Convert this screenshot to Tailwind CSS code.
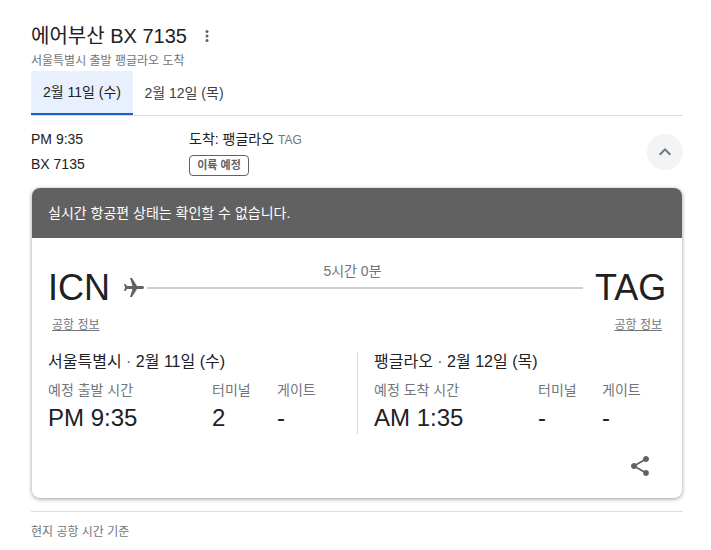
<!DOCTYPE html>
<html lang="ko">
<head>
  <meta charset="UTF-8" />
  <title>에어부산 BX 7135</title>
  <script src="https://cdn.jsdelivr.net/npm/@tailwindcss/browser@4"></script>
</head>
<body class="bg-white text-[#202124] font-['Liberation_Sans','Noto_Sans_CJK_KR',sans-serif] overflow-hidden">
  <div class="w-[652px] ml-[31px] pt-[23px]">
    <!-- Title -->
    <div class="flex items-center h-[26px]">
      <h1 class="text-[20px] leading-[26px] font-normal">에어부산 BX 7135</h1>
      <svg class="ml-2 w-[24px] h-[24px] text-[#5f6368]" viewBox="0 0 24 24" fill="currentColor">
        <circle cx="12" cy="7.5" r="1.5"/><circle cx="12" cy="12" r="1.5"/><circle cx="12" cy="16.5" r="1.5"/>
      </svg>
    </div>
    <p class="text-[12px] leading-[16px] text-[#70757a] mt-[4px]">서울특별시 출발 팽글라오 도착</p>

    <!-- Tabs -->
    <div class="flex h-[44px] border-b border-[#dadce0] mt-[2px] box-content">
      <div class="w-[102px] h-[44px] bg-[#e8f0fe] border-b-2 border-[#1a5fc8] flex items-center justify-center text-[14px] text-[#202124]">2월 11일 (수)</div>
      <div class="w-[102px] h-[44px] flex items-center justify-center text-[14px] text-[#3c4043]">2월 12일 (목)</div>
    </div>

    <!-- Flight row -->
    <div class="flex relative h-[72px] text-[14px]">
      <div class="w-[158px] pt-[13px]">
        <div class="leading-[20px]">PM 9:35</div>
        <div class="leading-[20px] mt-[5px]">BX 7135</div>
      </div>
      <div class="pt-[13px]">
        <div class="leading-[20px]">도착: 팽글라오 <span class="text-[12px] text-[#70757a]">TAG</span></div>
        <div class="mt-[5px] w-[60px] h-[21px] border border-[#5f6368] rounded-[4px] flex items-center justify-center text-[11px] font-bold text-[#5f6368]">이륙 예정</div>
      </div>
      <div class="ml-auto mt-[18px] w-[36px] h-[36px] rounded-full bg-[#f1f3f4] flex items-center justify-center">
        <svg class="w-[24px] h-[24px] text-[#70757a]" viewBox="0 0 24 24" fill="currentColor"><path d="M12 8l-6 6 1.41 1.41L12 10.83l4.59 4.58L18 14z"/></svg>
      </div>
    </div>

    <!-- Card -->
    <div class="mx-px h-[310px] rounded-[8px] bg-white shadow-[0_1px_4px_rgba(0,0,0,0.4)] overflow-hidden">
      <div class="h-[50px] bg-[#616161] text-white text-[14px] flex items-center px-[16px]">실시간 항공편 상태는 확인할 수 없습니다.</div>

      <div class="pl-[16px] pr-[17px] pt-[24px]">
        <!-- Route -->
        <div class="flex items-start h-[52px]">
          <div class="text-[36px] leading-[52px] w-[74px]">ICN</div>
          <div class="flex-1 relative flex items-center mt-[2px] h-[48px]">
            <svg class="w-[24px] h-[24px] text-[#5f6368] shrink-0 rotate-90" viewBox="0 0 24 24" fill="currentColor"><path d="M21 16v-2l-8-5V3.500c0-.83-.67-1.500-1.500-1.500S10 2.670 10 3.500V9l-8 5v2l8-2.500V19l-2 1.500V22l3.500-1 3.500 1v-1.500L13 19v-5.500l8 2.500z"/></svg>
            <div class="h-[2px] flex-1 bg-[#cfcfcf] ml-[1px] mr-[12px]"></div>
            <div class="absolute left-0 right-0 top-[-1px] text-center text-[14px] leading-[16px] text-[#70757a] pr-[12px]">5시간 0분</div>
          </div>
          <div class="text-[36px] leading-[52px] w-[70px] text-right">TAG</div>
        </div>
        <div class="flex justify-between pl-[4px] pr-[3px] text-[12px] leading-[16px] text-[#70757a] underline mt-[3px]">
          <span>공항 정보</span><span>공항 정보</span>
        </div>

        <!-- Airports -->
        <div class="flex mt-[19px]">
          <div class="w-[310px] h-[82px] border-r border-[#dadce0]">
            <div class="text-[16px] leading-[18px] pt-px h-[18px]">서울특별시 <span class="text-[#5f6368]">·</span> 2월 11일 (수)</div>
            <div class="flex text-[14px] text-[#70757a] leading-[18px] mt-[11px]">
              <div class="w-[164px]">예정 출발 시간</div><div class="w-[65px]">터미널</div><div>게이트</div>
            </div>
            <div class="flex text-[24px] leading-[28px] mt-[5px]">
              <div class="w-[164px]">PM 9:35</div><div class="w-[65px]">2</div><div>-</div>
            </div>
          </div>
          <div class="pl-[16px] flex-1">
            <div class="text-[16px] leading-[18px] pt-px h-[18px]">팽글라오 <span class="text-[#5f6368]">·</span> 2월 12일 (목)</div>
            <div class="flex text-[14px] text-[#70757a] leading-[18px] mt-[11px]">
              <div class="w-[164px]">예정 도착 시간</div><div class="w-[64px]">터미널</div><div>게이트</div>
            </div>
            <div class="flex text-[24px] leading-[28px] mt-[5px]">
              <div class="w-[164px]">AM 1:35</div><div class="w-[64px]">-</div><div>-</div>
            </div>
          </div>
        </div>

        <!-- Share -->
        <div class="flex justify-end mt-[20px] pr-[13px]">
          <svg class="w-[24px] h-[24px] text-[#5f6368]" viewBox="0 0 24 24" fill="currentColor"><path d="M18 16.080c-.76 0-1.440.3-1.960.77L8.910 12.700c.05-.23.090-.46.090-.7s-.04-.47-.09-.7l7.050-4.110c.54.5 1.250.81 2.040.81 1.660 0 3-1.340 3-3s-1.340-3-3-3-3 1.340-3 3c0 .24.040.47.090.7L8.040 9.810C7.500 9.310 6.790 9 6 9c-1.660 0-3 1.340-3 3s1.340 3 3 3c.79 0 1.500-.31 2.040-.81l7.120 4.160c-.05.21-.08.430-.08.650 0 1.610 1.310 2.920 2.920 2.920s2.920-1.310 2.920-2.920-1.310-2.920-2.920-2.920z"/></svg>
        </div>
      </div>
    </div>

    <!-- Footer -->
    <div class="mt-[13px] border-t border-[#dadce0] pt-[12px] text-[12px] leading-[16px] text-[#70757a]">현지 공항 시간 기준</div>
  </div>
</body>
</html>
